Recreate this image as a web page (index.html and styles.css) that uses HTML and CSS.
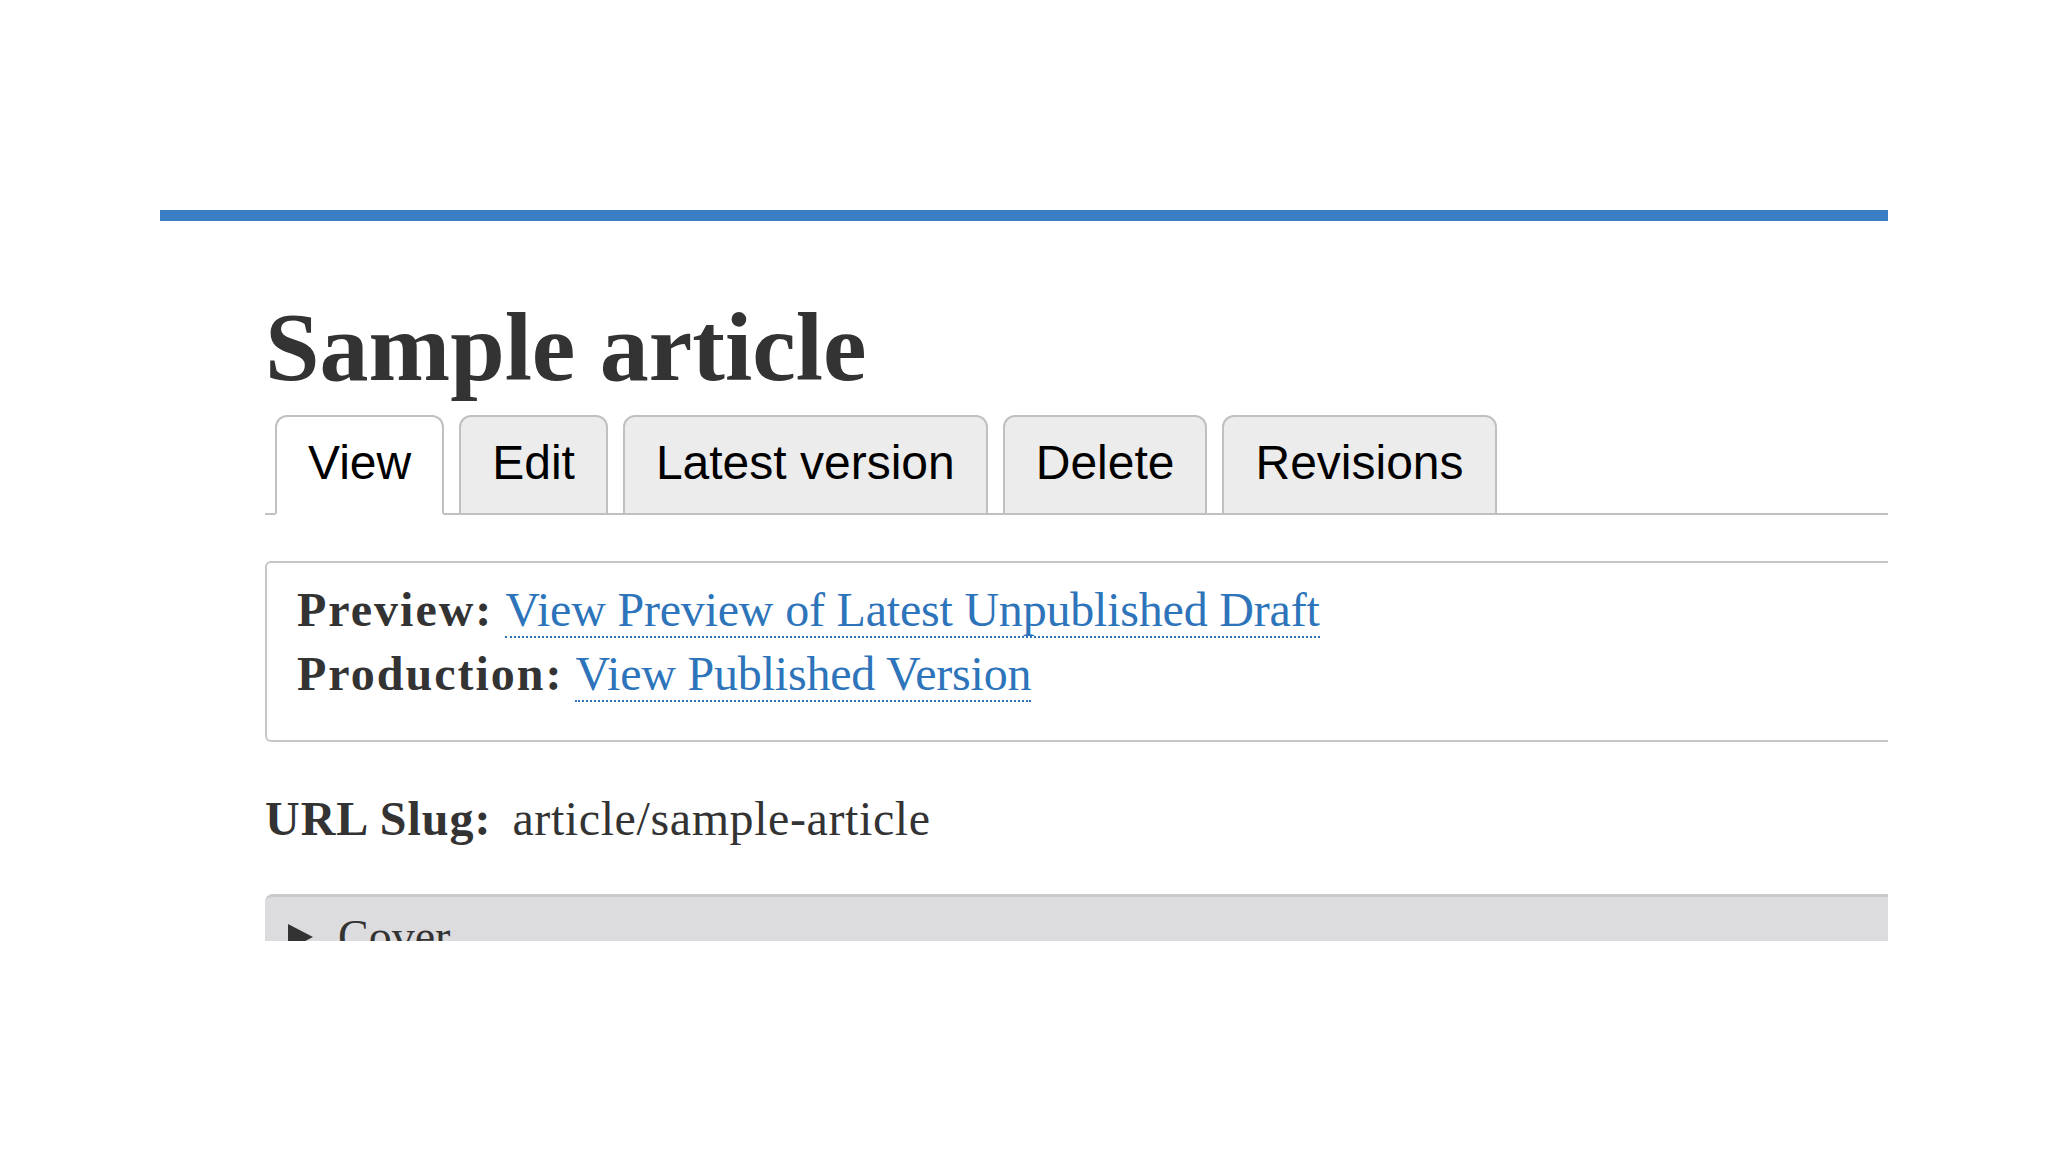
FILE: index.html
```html
<!DOCTYPE html>
<html lang="en">

<head>
    <meta charset="UTF-8" />
    <title>Sample article</title>
    <link rel="stylesheet" href="styles.css">
</head>

<body>
    <div class="shot">
        <!-- top bar -->
        <div class="topbar"></div>

        <div class="content">
            <h1 class="title">Sample article</h1>

            <!-- tabs -->
            <ul class="tabs">
                <li class="tab active"><a href="javascript:;">View</a></li>
                <li class="tab"><a href="javascript:;">Edit</a></li>
                <li class="tab"><a href="javascript:;">Latest version</a></li>
                <li class="tab"><a href="javascript:;">Delete</a></li>
                <li class="tab"><a href="javascript:;">Revisions</a></li>
            </ul>

            <!-- preview links -->
            <div class="preview-box">
                <p><strong>Preview:</strong> <a class="link" href="javascript:;">View Preview of Latest Unpublished Draft</a></p>
                <p><strong>Production:</strong> <a class="link" href="javascript:;">View Published Version</a></p>
            </div>

            <p class="slug"><strong>URL Slug:</strong><span class="slug-value">article/sample-article</span></p>

            <!-- collapsed section -->
            <div class="cover">
                <span class="arrow"></span>
                <span class="cover-label">Cover</span>
            </div>
        </div>
    </div>
</body>

</html>
```

FILE: styles.css
```css
* {
    margin: 0;
    padding: 0;
    box-sizing: border-box;
}

ul {
    list-style: none;
}

body {
    background: #fff;
    font-family: "Liberation Serif", "Times New Roman", serif;
    color: #333;
}

.shot {
    overflow: hidden;
    width: 1728px;
    height: 731px;
    margin: 210px 0 0 160px;
}

.topbar {
    height: 11px;
    background-color: #3a7fc3;
}

.content {
    width: 1900px;
    padding-left: 105px;
}

.title {
    margin-top: 78px;
    font-size: 98px;
    line-height: 96px;
    font-weight: bold;
    color: #333;
}

.tabs {
    display: flex;
    margin-top: 20px;
    padding-left: 10px;
    border-bottom: 2px solid #c0c0c0;
}

.tabs .tab {
    margin-right: 15px;
    margin-bottom: -2px;
}

.tabs .tab a {
    display: block;
    padding: 0 31px;
    height: 100px;
    line-height: 92px;
    font-family: "Liberation Sans", Arial, sans-serif;
    font-size: 48px;
    color: #000;
    text-decoration: none;
    background-color: #ececec;
    border: 2px solid #c0c0c0;
    border-radius: 12px 12px 0 0;
}

.tabs .tab.active a {
    background-color: #fff;
    border-bottom-color: #fff;
}

.preview-box {
    margin-top: 46px;
    padding: 15px 30px 34px;
    border: 2px solid #c6c6c6;
    border-radius: 6px;
    font-size: 48px;
    line-height: 64px;
}

.preview-box strong {
    letter-spacing: 2px;
}

.link {
    color: #2d74ba;
    text-decoration: none;
    letter-spacing: -0.2px;
    border-bottom: 2px dotted #2d74ba;
}

.slug {
    margin-top: 46px;
    font-size: 48px;
    line-height: 62px;
}

.slug strong {
    letter-spacing: 1px;
}

.slug-value {
    margin-left: 21px;
    letter-spacing: 0.6px;
}

.cover {
    display: flex;
    align-items: flex-start;
    margin-top: 44px;
    height: 120px;
    padding: 16px 0 0 23px;
    background-color: #dcdbde;
    border-top: 3px solid #c9c9cb;
    border-radius: 8px 0 0 0;
}

.cover .arrow {
    margin-top: 11px;
    width: 0;
    height: 0;
    border-left: 25px solid #333;
    border-top: 13px solid transparent;
    border-bottom: 13px solid transparent;
}

.cover-label {
    margin-left: 25px;
    font-size: 46px;
    line-height: 48px;
    color: #333;
}
```
